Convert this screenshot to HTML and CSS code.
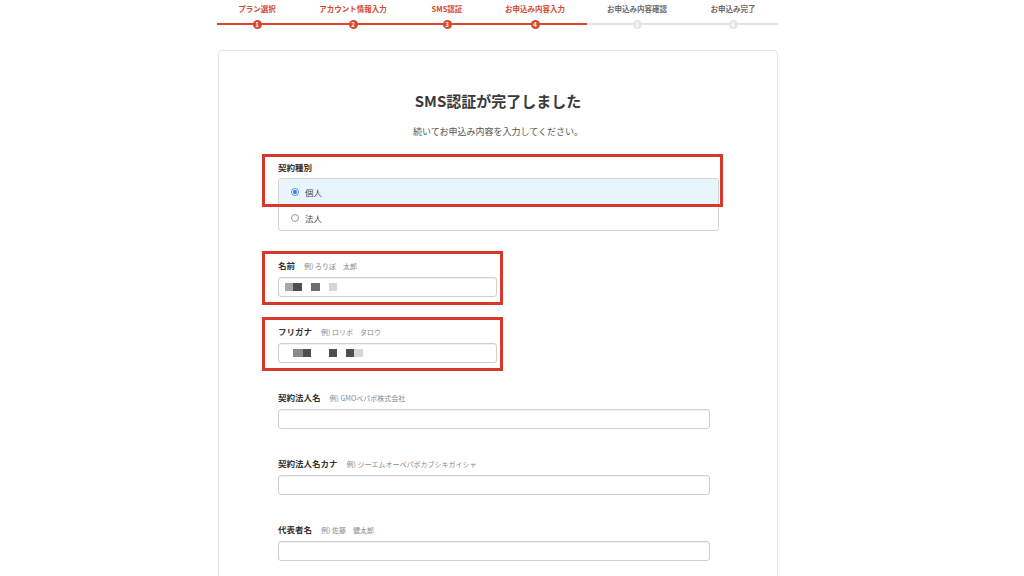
FILE: index.html
```html
<!DOCTYPE html>
<html lang="ja">
<head>
    <meta charset="UTF-8">
    <meta name="viewport" content="width=device-width, initial-scale=1.0">
    <title>お申込み内容入力</title>
    <link rel="stylesheet" href="styles.css">
</head>
<body>
    <div class="page">
        <ol class="stepper">
            <li class="step done"><span class="step-label">プラン選択</span><span class="step-num">1</span></li>
            <li class="step done"><span class="step-label">アカウント情報入力</span><span class="step-num">2</span></li>
            <li class="step done"><span class="step-label">SMS認証</span><span class="step-num">3</span></li>
            <li class="step done"><span class="step-label">お申込み内容入力</span><span class="step-num">4</span></li>
            <li class="step"><span class="step-label">お申込み内容確認</span><span class="step-num">5</span></li>
            <li class="step"><span class="step-label">お申込み完了</span><span class="step-num">6</span></li>
        </ol>

        <div class="card">
            <h1 class="card-title">SMS認証が完了しました</h1>
            <p class="card-lead">続いてお申込み内容を入力してください。</p>

            <div class="field field-type">
                <div class="field-label">契約種別</div>
                <div class="radio-group">
                    <label class="radio-option checked"><span class="radio"></span>個人</label>
                    <label class="radio-option"><span class="radio"></span>法人</label>
                </div>
                <div class="mark mark-type"></div>
            </div>

            <div class="field">
                <div class="field-label">名前<span class="hint">例) ろりぽ　太郎</span></div>
                <div class="input input-half">
                    <span class="px px-a" style="width:8px"></span><span class="px px-d" style="width:9px"></span>
                    <span class="px px-c gap" style="width:9px"></span>
                    <span class="px px-e gap" style="width:8px"></span>
                </div>
                <div class="mark mark-name"></div>
            </div>

            <div class="field">
                <div class="field-label">フリガナ<span class="hint">例) ロリポ　タロウ</span></div>
                <div class="input input-half input-kana">
                    <span class="px px-b" style="width:10px"></span><span class="px px-d" style="width:8px"></span>
                    <span class="px px-d gap-wide" style="width:8px"></span>
                    <span class="px px-d gap" style="width:8px"></span><span class="px px-e" style="width:9px"></span>
                </div>
                <div class="mark mark-name"></div>
            </div>

            <div class="field">
                <div class="field-label">契約法人名<span class="hint">例) GMOペパボ株式会社</span></div>
                <input class="input input-wide" type="text">
            </div>

            <div class="field">
                <div class="field-label">契約法人名カナ<span class="hint">例) ジーエムオーペパボカブシキガイシャ</span></div>
                <input class="input input-wide" type="text">
            </div>

            <div class="field">
                <div class="field-label">代表者名<span class="hint">例) 佐藤　健太郎</span></div>
                <input class="input input-wide" type="text">
            </div>
        </div>
    </div>
</body>
</html>
```

FILE: styles.css
```css
* {
    box-sizing: border-box;
}

body {
    margin: 0;
    background-color: #ffffff;
    color: #333333;
    font-family: "Noto Sans CJK JP", "Noto Sans", sans-serif;
}

.page {
    width: 560px;
    margin-left: 218px;
}

/* steps */
.stepper {
    display: grid;
    grid-template-columns: 94px 98px 90px 86px 118px 74px;
    width: 570px;
    margin: 0 0 0 -8px;
    padding: 3px 0 0;
    list-style: none;
    background-image: linear-gradient(to right,
        transparent 7px, #d9482c 7px, #d9482c 377px,
        #e4e4e4 377px, #e4e4e4 568px, transparent 568px);
    background-size: 100% 2px;
    background-position: 0 23px;
    background-repeat: no-repeat;
}

.step {
    display: flex;
    flex-direction: column;
    align-items: center;
    gap: 5px;
}

.step-label {
    font-size: 7.5px;
    line-height: 12px;
    font-weight: bold;
    color: #6a6a6a;
    white-space: nowrap;
}

.step-num {
    width: 9px;
    height: 9px;
    border-radius: 50%;
    background-color: #e6e6e6;
    color: #ffffff;
    font-size: 6px;
    line-height: 9px;
    font-weight: bold;
    text-align: center;
}

.step.done .step-label {
    color: #d6492e;
}

.step.done .step-num {
    background-color: #d9482c;
}

/* card */
.card {
    margin-top: 21px;
    padding: 40px 0 40px 59px;
    border: 1px solid #e4e4e4;
    border-radius: 4px;
}

.card-title {
    margin: 0 0 0 -59px;
    font-size: 15px;
    line-height: 20px;
    font-weight: bold;
    text-align: center;
    color: #3a3a3a;
}

.card-lead {
    margin: 15px 0 23px -59px;
    font-size: 9px;
    line-height: 12px;
    text-align: center;
    color: #555555;
}

.field {
    position: relative;
    margin-bottom: 28px;
}

.field-label {
    margin-bottom: 5px;
    font-size: 8.5px;
    line-height: 12px;
    font-weight: bold;
    color: #333333;
}

.hint {
    margin-left: 9px;
    font-size: 7px;
    font-weight: normal;
    color: #8a8a8a;
}

.radio-group {
    width: 441px;
    border: 1px solid #d4d4d4;
    border-radius: 3px;
    overflow: hidden;
}

.radio-option {
    display: flex;
    align-items: center;
    height: 25.5px;
    padding-left: 12px;
    font-size: 8.5px;
    color: #444444;
}

.radio-option + .radio-option {
    border-top: 1px solid #d4d4d4;
}

.radio-option.checked {
    background-color: #e8f5fd;
}

.radio {
    width: 8px;
    height: 8px;
    margin-right: 6px;
    border: 1px solid #9a9a9a;
    border-radius: 50%;
    background-color: #ffffff;
}

.radio-option.checked .radio {
    border-color: #7aa6e6;
    background-color: #3a78d4;
    box-shadow: inset 0 0 0 1px #ffffff;
}

.input {
    display: flex;
    align-items: center;
    height: 20px;
    margin: 0;
    padding: 0 0 0 6px;
    border: 1px solid #cfcfcf;
    border-radius: 3px;
    background-color: #ffffff;
    box-shadow: inset 0 1px 1px rgba(0, 0, 0, 0.06);
    font: inherit;
    font-size: 9px;
    line-height: 18px;
}

.input-half {
    width: 219px;
}

.input-wide {
    width: 432px;
}

.input-kana {
    padding-left: 14px;
}

/* blurred values */
.px {
    display: inline-block;
    height: 8px;
}

.px-a { background-color: #a8a8a8; }
.px-b { background-color: #8a8a8a; }
.px-c { background-color: #6e6e6e; }
.px-d { background-color: #4e4e4e; }
.px-e { background-color: #d6d6d6; }

.gap {
    margin-left: 9px;
}

.gap-wide {
    margin-left: 18px;
}

/* highlight frames */
.mark {
    position: absolute;
    border: 3px solid #d8372b;
    pointer-events: none;
}

.mark-type {
    top: -7px;
    left: -16px;
    width: 461px;
    height: 53px;
}

.mark-name {
    top: -8px;
    bottom: -8px;
    left: -16px;
    width: 241px;
}
```
